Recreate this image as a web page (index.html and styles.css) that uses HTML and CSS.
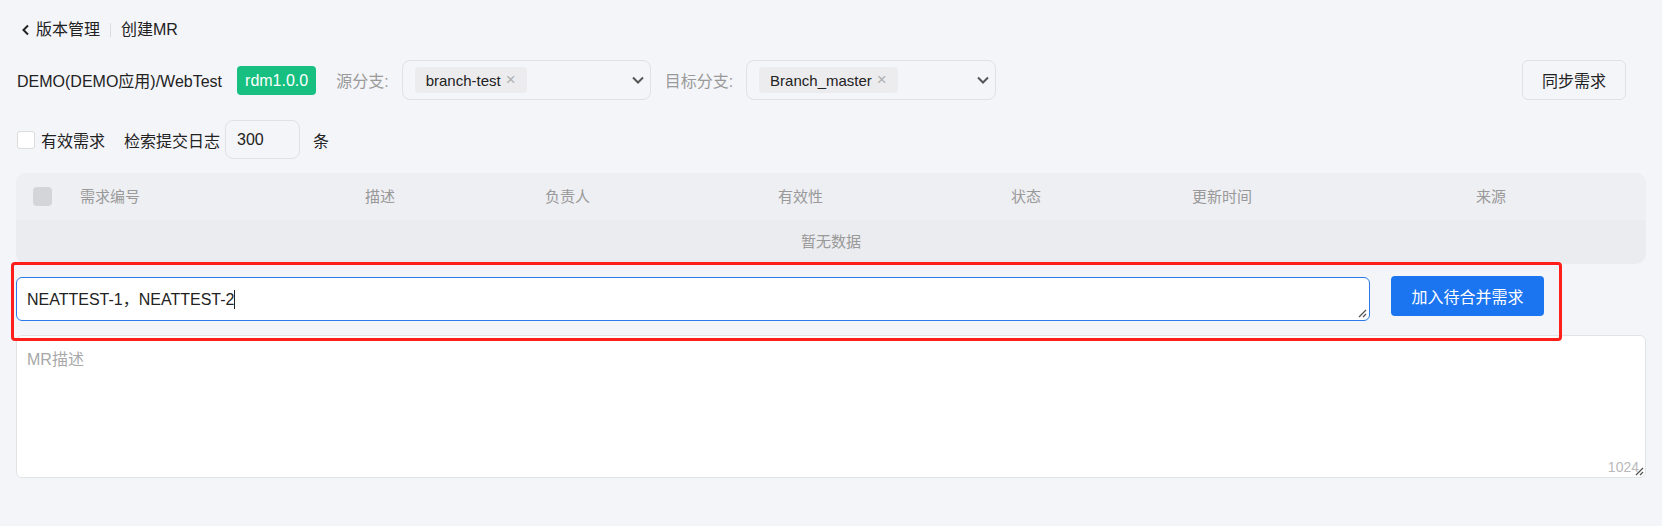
FILE: index.html
```html
<!DOCTYPE html>
<html lang="zh">
<head>
<meta charset="utf-8">
<title>创建MR</title>
<link rel="stylesheet" href="styles.css">
</head>
<body>
<div class="page">
  <div class="breadcrumb">
    <svg class="back" width="10" height="12" viewBox="0 0 10 12"><path d="M7 1.5 L2.5 6 L7 10.5" fill="none" stroke="#222" stroke-width="2"/></svg>
    <span class="crumb">版本管理</span>
    <span class="sep"></span>
    <span class="crumb">创建MR</span>
  </div>

  <div class="row2">
    <span class="app">DEMO(DEMO应用)/WebTest</span>
    <span class="badge">rdm1.0.0</span>
    <span class="lbl lbl-src">源分支:</span>
    <div class="select">
      <span class="tag">branch-test<span class="x">×</span></span>
      <svg class="chev" width="14" height="10" viewBox="0 0 14 10"><path d="M2 2.5 L7 7.5 L12 2.5" fill="none" stroke="#555" stroke-width="2"/></svg>
    </div>
    <span class="lbl lbl-dst">目标分支:</span>
    <div class="select select2">
      <span class="tag">Branch_master<span class="x">×</span></span>
      <svg class="chev" width="14" height="10" viewBox="0 0 14 10"><path d="M2 2.5 L7 7.5 L12 2.5" fill="none" stroke="#555" stroke-width="2"/></svg>
    </div>
    <button class="sync">同步需求</button>
  </div>

  <div class="row3">
    <span class="checkbox"></span>
    <span class="ck-label">有效需求</span>
    <span class="log-label">检索提交日志</span>
    <span class="num">300</span>
    <span class="unit">条</span>
  </div>

  <div class="table">
    <div class="thead">
      <span class="th-check"><span class="cb-dis"></span></span>
      <span class="th c1">需求编号</span>
      <span class="th c2">描述</span>
      <span class="th c3">负责人</span>
      <span class="th c4">有效性</span>
      <span class="th c5">状态</span>
      <span class="th c6">更新时间</span>
      <span class="th c7">来源</span>
    </div>
    <div class="tempty">暂无数据</div>
  </div>

  <div class="merge">
    <div class="ta-input">NEATTEST-1，NEATTEST-2<span class="caret"></span>
      <svg class="grip" width="10" height="10" viewBox="0 0 10 10"><path d="M9 2 L2 9 M9 6 L6 9" stroke="#555" stroke-width="1.3"/></svg>
    </div>
    <button class="primary">加入待合并需求</button>
  </div>

  <div class="mr-desc">
    <span class="ph">MR描述</span>
    <span class="count">1024</span>
    <svg class="grip grip2" width="10" height="10" viewBox="0 0 10 10"><path d="M9 2 L2 9 M9 6 L6 9" stroke="#555" stroke-width="1.3"/></svg>
  </div>

  <div class="highlight"></div>
</div>
</body>
</html>
```

FILE: styles.css
```css
* { box-sizing: border-box; }
html, body { margin: 0; padding: 0; }
body {
  background: #f4f5f9;
  font-family: "Liberation Sans", Arial, "Noto Sans CJK SC", sans-serif;
  color: #222;
  font-size: 16px;
}
.page {
  position: relative;
  padding: 20px 16px 0 16px;
  width: 1662px;
  height: 526px;
}
.breadcrumb {
  display: flex;
  align-items: center;
  height: 20px;
  line-height: 20px;
  padding-left: 5px;
}
.back { margin-right: 5px; }
.crumb { font-size: 16px; color: #222; }
.sep {
  width: 1px;
  height: 14px;
  background: #dcdcdc;
  margin: 0 10px;
}

.row2 {
  display: flex;
  align-items: center;
  height: 40px;
  margin-top: 20px;
  padding-left: 1px;
}
.app { font-size: 16px; color: #222; }
.badge {
  margin-left: 15px;
  background: #17bf80;
  color: #fff;
  font-size: 16px;
  height: 29px;
  line-height: 29px;
  padding: 0 8px;
  border-radius: 4px;
}
.lbl { color: #9a9a9a; font-size: 16px; }
.lbl-src { margin-left: 20px; }
.lbl-dst { margin-left: 14px; }
.select {
  position: relative;
  margin-left: 13px;
  width: 249px;
  height: 40px;
  border: 1px solid #dfe1e6;
  border-radius: 8px;
  display: flex;
  align-items: center;
  padding-left: 12px;
}
.select2 { margin-left: 13px; width: 250px; }
.tag {
  display: inline-flex;
  align-items: center;
  height: 26px;
  padding: 0 11px;
  background: #ececef;
  border-radius: 4px;
  font-size: 15px;
  color: #222;
}
.x {
  color: #b0b0b0;
  font-size: 17px;
  margin-left: 5px;
}
.chev { margin-left: auto; margin-right: 5px; }
.sync {
  margin-left: auto;
  margin-right: 20px;
  width: 104px;
  height: 40px;
  background: #f4f5f9;
  border: 1px solid #dfe1e6;
  border-radius: 6px;
  font-family: inherit;
  font-size: 16px;
  color: #222;
}

.row3 {
  display: flex;
  align-items: center;
  height: 39px;
  margin-top: 20px;
  padding-left: 1px;
}
.checkbox {
  width: 18px;
  height: 18px;
  background: #fff;
  border: 1px solid #dcdcdc;
  border-radius: 3px;
}
.ck-label { margin-left: 6px; font-size: 16px; }
.log-label { margin-left: 19px; font-size: 16px; }
.num {
  margin-left: 5px;
  width: 75px;
  height: 39px;
  line-height: 37px;
  border: 1px solid #dfe1e6;
  border-radius: 8px;
  padding-left: 11px;
  font-size: 16px;
}
.unit { margin-left: 13px; font-size: 16px; }

.table {
  margin-top: 14px;
  width: 1630px;
  border-radius: 10px;
  overflow: hidden;
  background: #ebecf0;
}
.thead {
  position: relative;
  height: 47px;
  background: #eeeff3;
  display: flex;
  align-items: center;
  color: #999;
  font-size: 15px;
}
.th-check { width: 64px; padding-left: 17px; display: flex; }
.cb-dis {
  width: 19px;
  height: 19px;
  border-radius: 4px;
  background: #d4d5d8;
}
.th { position: absolute; top: 14px; line-height: 20px; }
.c1 { left: 64px; }
.c2 { left: 349px; }
.c3 { left: 529px; }
.c4 { left: 762px; }
.c5 { left: 995px; }
.c6 { left: 1176px; }
.c7 { left: 1460px; }
.tempty {
  height: 44px;
  line-height: 44px;
  text-align: center;
  color: #999;
  font-size: 15px;
}

.merge {
  display: flex;
  align-items: flex-start;
  margin-top: 12px;
}
.ta-input {
  position: relative;
  margin-top: 1px;
  width: 1354px;
  height: 44px;
  background: #fff;
  border: 1px solid #2a7ae9;
  border-radius: 6px;
  padding: 12px 0 0 10px;
  font-size: 16px;
  line-height: 20px;
  color: #222;
}
.caret {
  display: inline-block;
  width: 1px;
  height: 19px;
  background: #222;
  vertical-align: -4px;
}
.grip { position: absolute; right: 2px; bottom: 2px; }
.primary {
  margin-left: 21px;
  width: 153px;
  height: 40px;
  border: none;
  border-radius: 4px;
  background: #1b74f0;
  color: #fff;
  font-family: inherit;
  font-size: 16px;
}

.mr-desc {
  position: relative;
  margin-top: 14px;
  width: 1630px;
  height: 143px;
  background: #fff;
  border: 1px solid #e2e3e6;
  border-radius: 6px;
  padding: 10px 10px;
}
.ph { color: #a8a8a8; font-size: 16px; }
.count {
  position: absolute;
  right: 6px;
  bottom: 2px;
  color: #b9b9b9;
  font-size: 14px;
}
.grip2 { right: 1px; bottom: 1px; }

.highlight {
  position: absolute;
  left: 11px;
  top: 262px;
  width: 1551px;
  height: 79px;
  border: 3px solid #ff1f1a;
  border-radius: 4px;
  pointer-events: none;
}
```
